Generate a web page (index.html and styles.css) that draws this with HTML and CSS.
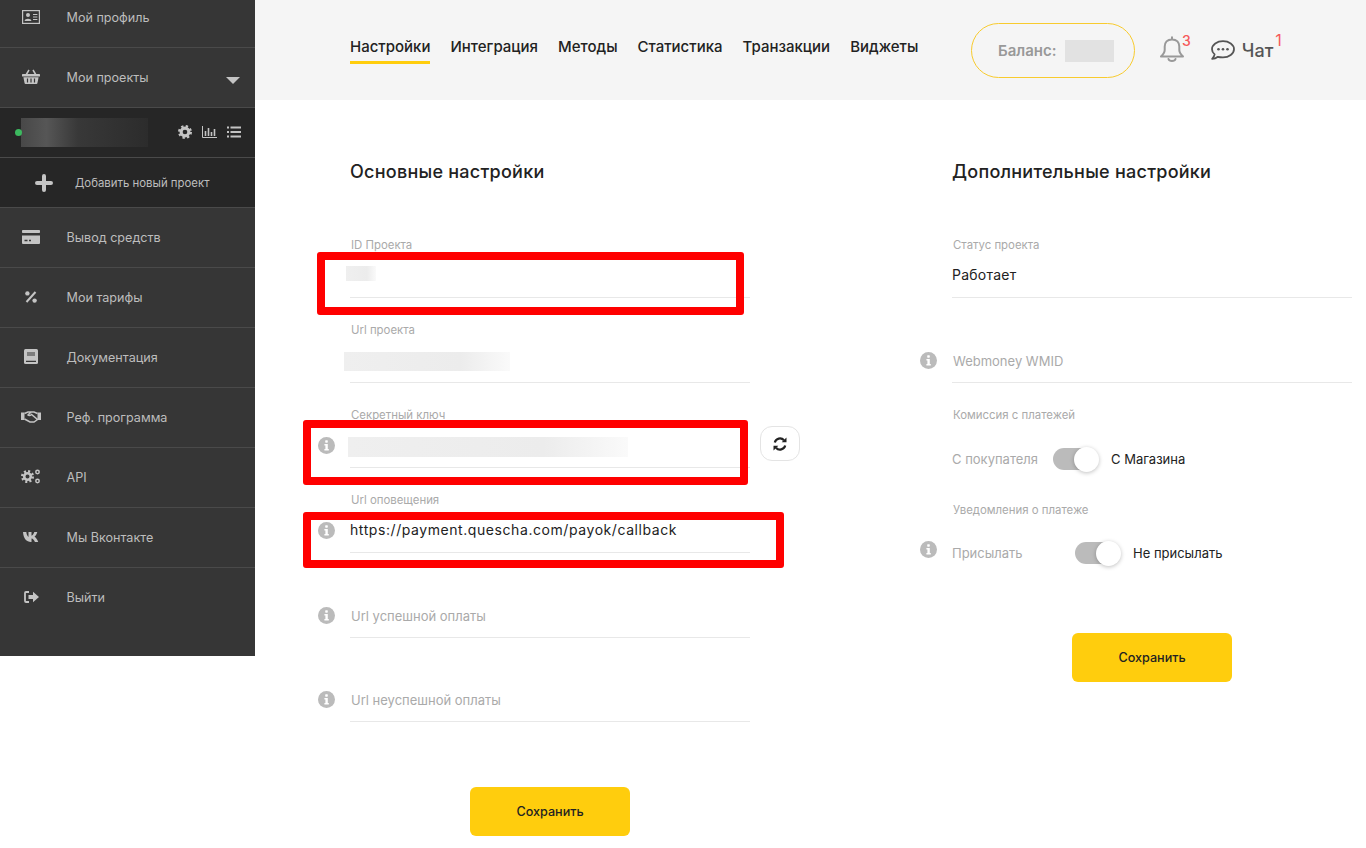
FILE: index.html
```html
<!DOCTYPE html>
<html lang="ru">
  <head>
    <meta charset="UTF-8" />
    <title>Настройки проекта</title>
    <link rel="stylesheet" href="styles.css">
  </head>
  <body>
    <div class="page">
      <aside class="sidebar">
        <a class="side-row side-row-first">
          <span class="side-icon"><svg width="18" height="14" viewBox="0 0 18 14"><rect x=".6" y=".6" width="16.8" height="12.8" fill="#363636" stroke="#c4c4c4" stroke-width="1.2"/><circle cx="6" cy="5" r="2" fill="#c4c4c4"/><path d="M2.6 11c0-3 6.8-3 6.8 0z" fill="#c4c4c4"/><path d="M11 4.5h4.4M11 7h4.4M11 9.5h4.4" stroke="#c4c4c4" stroke-width="1.1"/></svg></span>
          Мой профиль
        </a>
        <a class="side-row">
          <span class="side-icon"><svg width="18" height="15" viewBox="0 0 18 15"><path d="M4 6l3-5M14 6l-3-5" stroke="#c4c4c4" stroke-width="1.5" fill="none"/><rect y="5" width="18" height="2.6" rx=".6" fill="#c4c4c4"/><path d="M1.4 8.2h15.2l-1.2 6a1 1 0 0 1-1 .8H3.6a1 1 0 0 1-1-.8z" fill="#c4c4c4"/><path d="M5.5 9.5v4M9 9.5v4M12.5 9.5v4" stroke="#363636" stroke-width="1.2"/></svg></span>
          Мои проекты
          <span class="side-arrow"></span>
        </a>
        <div class="project-row">
          <span class="project-dot"></span>
          <span class="project-name"></span>
          <span class="project-tools">
            <svg width="14" height="14" viewBox="0 0 18 18"><circle cx="9" cy="9" r="5" fill="none" stroke="#c4c4c4" stroke-width="4"/><circle cx="9" cy="9" r="7.5" fill="none" stroke="#c4c4c4" stroke-width="3" stroke-dasharray="2.95 2.95"/></svg>
            <svg width="15" height="12" viewBox="0 0 15 12"><path d="M.5 0v11.5H15" fill="none" stroke="#c4c4c4"/><path d="M3.5 5v5M6.5 2v8M9.5 6v4M12.500 3v7" stroke="#c4c4c4" stroke-width="1.6"/></svg>
            <svg width="14" height="12" viewBox="0 0 14 12"><path d="M0 1.5h2M0 6h2M0 10.5h2M3.5 1.5H14M3.5 6H14M3.5 10.5H14" stroke="#c4c4c4" stroke-width="2.2"/></svg>
          </span>
        </div>
        <a class="add-row">
          <svg class="add-icon" width="18" height="18" viewBox="0 0 18 18"><path d="M9 2v14M2 9h14" stroke="#c4c4c4" stroke-width="4" stroke-linecap="round"/></svg>
          Добавить новый проект
        </a>
        <a class="side-row">
          <span class="side-icon"><svg width="18" height="14" viewBox="0 0 18 14"><rect width="18" height="3" rx=".8" fill="#c4c4c4"/><path d="M0 5.5h18V13a1 1 0 0 1-1 1H1a1 1 0 0 1-1-1z" fill="#c4c4c4"/><path d="M2.5 10.5h3M7 10.5h2" stroke="#363636" stroke-width="1.4"/></svg></span>
          Вывод средств
        </a>
        <a class="side-row">
          <span class="side-icon"><svg width="12" height="12" viewBox="0 0 12 12"><path d="M10.5 1L1.5 11" stroke="#c4c4c4" stroke-width="2"/><circle cx="2.4" cy="2.4" r="2.2" fill="#c4c4c4"/><circle cx="9.6" cy="9.6" r="2.2" fill="#c4c4c4"/></svg></span>
          Мои тарифы
        </a>
        <a class="side-row">
          <span class="side-icon"><svg width="14" height="15" viewBox="0 0 14 15"><rect width="14" height="15" rx="1.5" fill="#c4c4c4"/><path d="M3 4h8M3 6h8M2 12.3h10" stroke="#363636" stroke-width="1.2"/></svg></span>
          Документация
        </a>
        <a class="side-row">
          <span class="side-icon"><svg width="20" height="12" viewBox="0 0 20 12"><path d="M0 1.5h3.5V9H0zM16.5 1.5H20V9h-3.5z" fill="#c4c4c4"/><path d="M3.5 2.5L7 1h3l-3 3c1 1 2 .8 3.5-.5L16.500 8.500 13 11 9 11 3.500 8M16.500 2.500L13 1h-3" fill="none" stroke="#c4c4c4" stroke-width="1.5"/></svg></span>
          Реф. программа
        </a>
        <a class="side-row">
          <span class="side-icon"><svg width="20" height="15" viewBox="0 0 20 15"><circle cx="6.5" cy="7.5" r="3.3" fill="none" stroke="#c4c4c4" stroke-width="2.6"/><circle cx="6.5" cy="7.5" r="5.2" fill="none" stroke="#c4c4c4" stroke-width="2.6" stroke-dasharray="2 2.08"/><circle cx="16.5" cy="3" r="1.7" fill="none" stroke="#c4c4c4" stroke-width="1.5"/><circle cx="16.5" cy="12" r="1.7" fill="none" stroke="#c4c4c4" stroke-width="1.5"/></svg></span>
          API
        </a>
        <a class="side-row">
          <span class="side-icon"><svg width="16" height="10" viewBox="0 0 16 10"><path d="M0 0h3.300c.3 2.800 1.300 4.500 2.200 4.900V0h3v3.800C9.600 3.500 10.700 1.900 11.300 0h3c-.5 2.300-1.900 4-2.800 4.700 1 .6 2.800 2 3.700 5.300h-3.300C11.300 8 10 6.600 8.500 6.400V10H8C3.500 10 .4 6.500 0 0z" fill="#c4c4c4"/></svg></span>
          Мы Вконтакте
        </a>
        <a class="side-row side-row-last">
          <span class="side-icon"><svg width="15" height="12" viewBox="0 0 15 12"><path d="M5 1H2a1 1 0 0 0-1 1v8a1 1 0 0 0 1 1h3" fill="none" stroke="#c4c4c4" stroke-width="1.8"/><path d="M4.500 4h4.500V.8L15 6l-6 5.200V8H4.500z" fill="#c4c4c4"/></svg></span>
          Выйти
        </a>
      </aside>

      <main class="main">
        <header class="topbar">
          <nav class="tabs">
            <a class="tab tab-active">Настройки</a>
            <a class="tab">Интеграция</a>
            <a class="tab">Методы</a>
            <a class="tab">Статистика</a>
            <a class="tab">Транзакции</a>
            <a class="tab">Виджеты</a>
          </nav>
          <div class="balance">Баланс: <span class="balance-value"></span></div>
          <a class="bell">
            <svg width="24" height="27" viewBox="0 0 24 27"><path d="M12 3.500c-4.800 0-7.300 3-7.300 7v3.500c0 2.500-1.700 4.500-3.700 6.500h22c-2-2-3.700-4-3.700-6.500v-3.500c0-4-2.500-7-7.300-7zM12 1.200v2.300M8.500 23c.8 2.600 6.200 2.600 7 0" fill="none" stroke="#999" stroke-width="2" stroke-linejoin="round" stroke-linecap="round"/></svg>
            <span class="count">3</span>
          </a>
          <a class="chat">
            <svg width="24" height="21" viewBox="0 0 24 21"><path d="M12 1.200c-6 0-11 3.500-11 8 0 2 1 3.800 2.600 5.200-.3 1.800-1.300 3.300-2.400 4.500 2.300 0 4.300-1 5.700-2.100 1.500.4 3.200.5 5.100.5 6 0 11-3.600 11-8.100s-5-8-11-8z" fill="none" stroke="#555" stroke-width="1.8" stroke-linejoin="round"/><circle cx="7.5" cy="9.3" r="1.3" fill="#555"/><circle cx="12" cy="9.3" r="1.3" fill="#555"/><circle cx="16.5" cy="9.3" r="1.3" fill="#555"/></svg>
            <span class="chat-name">Чат</span>
            <span class="count count-chat">1</span>
          </a>
        </header>

        <div class="columns">
          <section class="column">
            <h2 class="column-title">Основные настройки</h2>
            <div class="field">
              <div class="field-label">ID Проекта</div>
              <div class="field-value"><span class="blur blur-id"></span></div>
            </div>
            <div class="field">
              <div class="field-label">Url проекта</div>
              <div class="field-value"><span class="blur blur-url"></span></div>
            </div>
            <div class="field">
              <div class="field-label">Секретный ключ</div>
              <div class="field-value">
                <svg class="info" width="17" height="17" viewBox="0 0 17 17"><circle cx="8.5" cy="8.5" r="8.5" fill="#bbb"/><rect x="7.2" y="3.2" width="2.6" height="2.5" rx=".6" fill="#fff"/><path d="M6.4 7h3.400v5h1v1.600H6.400V12h1V8.600h-1z" fill="#fff"/></svg>
                <span class="blur blur-key"></span>
                <button class="refresh"><svg width="14" height="14" viewBox="0 0 14 14"><path d="M1.800 5.500A5.300 5.300 0 0 1 11 3.300M12.200 8.500A5.300 5.300 0 0 1 3 10.700" fill="none" stroke="#222" stroke-width="2.2"/><path d="M13.500.5v4.800H8.700zM.5 13.500V8.700h4.800z" fill="#222"/></svg></button>
              </div>
            </div>
            <div class="field">
              <div class="field-label">Url оповещения</div>
              <div class="field-value field-link">
                <svg class="info" width="17" height="17" viewBox="0 0 17 17"><circle cx="8.5" cy="8.5" r="8.5" fill="#bbb"/><rect x="7.2" y="3.2" width="2.6" height="2.5" rx=".6" fill="#fff"/><path d="M6.4 7h3.400v5h1v1.600H6.400V12h1V8.600h-1z" fill="#fff"/></svg>
                https://payment.quescha.com/payok/callback
              </div>
            </div>
            <div class="field">
              <div class="field-value">
                <svg class="info" width="17" height="17" viewBox="0 0 17 17"><circle cx="8.5" cy="8.5" r="8.5" fill="#bbb"/><rect x="7.2" y="3.2" width="2.6" height="2.5" rx=".6" fill="#fff"/><path d="M6.4 7h3.400v5h1v1.600H6.400V12h1V8.600h-1z" fill="#fff"/></svg>
                <span class="field-hint">Url успешной оплаты</span>
              </div>
            </div>
            <div class="field field-last">
              <div class="field-value">
                <svg class="info" width="17" height="17" viewBox="0 0 17 17"><circle cx="8.5" cy="8.5" r="8.5" fill="#bbb"/><rect x="7.2" y="3.2" width="2.6" height="2.5" rx=".6" fill="#fff"/><path d="M6.4 7h3.400v5h1v1.600H6.400V12h1V8.600h-1z" fill="#fff"/></svg>
                <span class="field-hint">Url неуспешной оплаты</span>
              </div>
            </div>
            <button class="save save-left">Сохранить</button>
          </section>

          <section class="column">
            <h2 class="column-title">Дополнительные настройки</h2>
            <div class="field">
              <div class="field-label">Статус проекта</div>
              <div class="field-value">Работает</div>
            </div>
            <div class="field">
              <div class="field-value">
                <svg class="info" width="17" height="17" viewBox="0 0 17 17"><circle cx="8.5" cy="8.5" r="8.5" fill="#bbb"/><rect x="7.2" y="3.2" width="2.6" height="2.5" rx=".6" fill="#fff"/><path d="M6.4 7h3.400v5h1v1.600H6.400V12h1V8.600h-1z" fill="#fff"/></svg>
                <span class="field-hint">Webmoney WMID</span>
              </div>
            </div>
            <div class="field-label option-label">Комиссия с платежей</div>
            <div class="switch-row">
              <span class="switch-off switch-off-short">С покупателя</span>
              <span class="switch"><span class="switch-knob"></span></span>
              <span class="switch-on">С Магазина</span>
            </div>
            <div class="field-label option-label option-label-second">Уведомления о платеже</div>
            <div class="switch-row">
              <svg class="info info-switch" width="17" height="17" viewBox="0 0 17 17"><circle cx="8.5" cy="8.5" r="8.5" fill="#bbb"/><rect x="7.2" y="3.2" width="2.6" height="2.5" rx=".6" fill="#fff"/><path d="M6.4 7h3.400v5h1v1.600H6.400V12h1V8.600h-1z" fill="#fff"/></svg>
              <span class="switch-off switch-off-long">Присылать</span>
              <span class="switch"><span class="switch-knob"></span></span>
              <span class="switch-on">Не присылать</span>
            </div>
            <button class="save save-right">Сохранить</button>
          </section>
        </div>
      </main>

      <div class="mark mark-id"></div>
      <div class="mark mark-key"></div>
      <div class="mark mark-callback"></div>
    </div>
  </body>
</html>
```

FILE: styles.css
```css
* {
  box-sizing: border-box;
}
html,
body {
  margin: 0;
  height: 100%;
  overflow: hidden;
  background: #fff;
}
body {
  font-family: Inter, "Noto Sans", sans-serif;
  color: #222;
}
.page {
  position: relative;
  display: flex;
  align-items: flex-start;
  height: 848px;
  overflow: hidden;
}

/* sidebar */
.sidebar {
  flex: 0 0 255px;
  height: 656px;
  overflow: hidden;
  background: #363636;
  color: #bdbdbd;
  font-size: 12.6px;
}
.side-row {
  display: flex;
  align-items: center;
  height: 60px;
  padding-left: 21px;
  border-bottom: 1px solid #4a4a4a;
}
.side-row-first {
  margin-top: -12px;
}
.side-row-last {
  height: 59px;
  border-bottom: none;
}
.side-icon {
  display: flex;
  justify-content: center;
  flex: 0 0 20px;
  margin-right: 25.5px;
  margin-bottom: 2px;
}
.side-arrow {
  width: 0;
  height: 0;
  margin-left: auto;
  margin-right: 15px;
  margin-top: 6px;
  border-left: 7px solid transparent;
  border-right: 7px solid transparent;
  border-top: 7px solid #c4c4c4;
}
.project-row {
  display: flex;
  align-items: center;
  height: 50px;
  padding-left: 15px;
  background: #262626;
  border-bottom: 1px solid #4a4a4a;
}
.project-dot {
  position: relative;
  z-index: 1;
  width: 7px;
  height: 7px;
  border-radius: 50%;
  background: #3cb95f;
}
.project-name {
  width: 127px;
  height: 29px;
  margin-left: -1px;
  background: linear-gradient(90deg, #484848, #565656 20%, #383838 45%, #2c2c2c);
}
.project-tools {
  display: flex;
  align-items: center;
  gap: 10px;
  margin-left: 30px;
  margin-bottom: 2px;
}
.add-row {
  display: flex;
  align-items: center;
  height: 50px;
  padding-left: 35px;
  background: #262626;
  border-bottom: 1px solid #4a4a4a;
  font-size: 11.4px;
}
.add-icon {
  margin-right: 22px;
}

/* top bar */
.main {
  flex: 1;
}
.topbar {
  display: flex;
  align-items: flex-start;
  height: 100px;
  padding-left: 95px;
  background: #f5f5f5;
}
.tabs {
  display: flex;
  gap: 20px;
  width: 567px;
  margin-top: 37px;
}
.tab {
  height: 27px;
  font-size: 15px;
  font-weight: 500;
  line-height: 20px;
  color: #222;
  white-space: nowrap;
}
.tab-active {
  border-bottom: 3px solid #ffcd0d;
}
.balance {
  display: flex;
  align-items: center;
  gap: 8px;
  width: 164px;
  height: 55px;
  margin-top: 23px;
  margin-left: 54px;
  padding-left: 26px;
  border: 1px solid #f8cb2e;
  border-radius: 28px;
  font-size: 15px;
  font-weight: 600;
  color: #999;
}
.balance-value {
  width: 49px;
  height: 22px;
  background: #e2e2e2;
}
.bell {
  display: flex;
  margin-top: 36px;
  margin-left: 25px;
}
.count {
  margin-left: -2px;
  margin-top: -3px;
  font-size: 14px;
  font-weight: 500;
  line-height: 16px;
  color: #f65a5a;
}
.chat {
  display: flex;
  align-items: flex-start;
  margin-top: 40px;
  margin-left: 20px;
}
.chat-name {
  margin-left: 7px;
  margin-top: 1px;
  font-size: 18px;
  font-weight: 500;
  line-height: 20px;
  color: #555;
}
.count-chat {
  margin-left: 2px;
  margin-top: -8px;
  font-size: 16px;
  font-weight: 400;
}

/* form columns */
.columns {
  display: flex;
  gap: 202px;
  padding-left: 95px;
  padding-top: 60px;
}
.column {
  width: 400px;
}
.column-title {
  margin: 0 0 29px;
  font-size: 18px;
  font-weight: 500;
  letter-spacing: 0.25px;
  line-height: 24px;
  color: #222;
  white-space: nowrap;
}
.field {
  display: flex;
  flex-direction: column;
  justify-content: flex-end;
  height: 85px;
  padding-bottom: 10px;
  border-bottom: 1px solid #e8e8e8;
}
.field-last {
  height: 84px;
}
.field-label {
  margin-bottom: 11px;
  padding-left: 1px;
  font-size: 11.4px;
  line-height: 14px;
  color: #aaa;
}
.field-value {
  display: flex;
  align-items: center;
  height: 24px;
  font-size: 14px;
  letter-spacing: 0.25px;
  line-height: 24px;
  color: #222;
  white-space: nowrap;
}
.field-link {
  letter-spacing: 0.57px;
}
.field-hint {
  margin-top: 2px;
  padding-left: 1px;
  font-size: 13px;
  letter-spacing: 0;
  color: #aaa;
}
.info {
  flex: none;
  margin-left: -32px;
  margin-right: 15px;
}
.blur {
  display: block;
  background: linear-gradient(90deg, #efefef, #ececec 70%, #fafafa);
}
.blur-id {
  width: 30px;
  height: 15px;
  margin-left: -4px;
  margin-top: -4px;
}
.blur-url {
  width: 166px;
  height: 19px;
  margin-left: -6px;
  margin-top: 3px;
}
.blur-key {
  width: 280px;
  height: 20px;
  margin-left: -2px;
  margin-top: 4px;
}
.refresh {
  display: flex;
  align-items: center;
  justify-content: center;
  flex: none;
  width: 40px;
  height: 35px;
  margin: -7px -50px -4px auto;
  padding: 0;
  background: #fff;
  border: 1px solid #e4e4e4;
  border-radius: 12px;
}
.option-label {
  margin-top: 25px;
  margin-bottom: 24px;
}
.option-label-second {
  margin-top: 31px;
  margin-bottom: 23px;
}
.switch-row {
  display: flex;
  align-items: center;
  height: 26px;
  font-size: 13px;
}
.switch-off {
  color: #aaa;
}
.switch-off-short {
  width: 101px;
}
.switch-off-long {
  width: 123px;
}
.switch-on {
  margin-left: 14px;
  color: #222;
}
.switch {
  display: flex;
  align-items: center;
  justify-content: flex-end;
  width: 44px;
  height: 22px;
  border-radius: 11px;
  background: #bbb;
}
.switch-knob {
  width: 25px;
  height: 25px;
  margin-right: -2px;
  border-radius: 50%;
  background: #fff;
  box-shadow: 0 1px 4px rgba(0, 0, 0, 0.25);
}
.info-switch {
  align-self: flex-start;
  margin-top: 1px;
}
.save {
  display: block;
  width: 160px;
  height: 49px;
  margin-left: auto;
  margin-right: auto;
  border: none;
  border-radius: 6px;
  background: #ffcd0d;
  font-family: inherit;
  font-size: 12.6px;
  font-weight: 500;
  color: #222;
}
.save-left {
  margin-top: 65px;
}
.save-right {
  margin-top: 67px;
}

/* red marks drawn over the form */
.mark {
  position: absolute;
  border: 8px solid #f00;
  border-radius: 3px;
}
.mark-id {
  left: 317px;
  top: 252px;
  width: 427px;
  height: 63px;
}
.mark-key {
  left: 303px;
  top: 420px;
  width: 445px;
  height: 65px;
}
.mark-callback {
  left: 303px;
  top: 512px;
  width: 481px;
  height: 56px;
}
```
